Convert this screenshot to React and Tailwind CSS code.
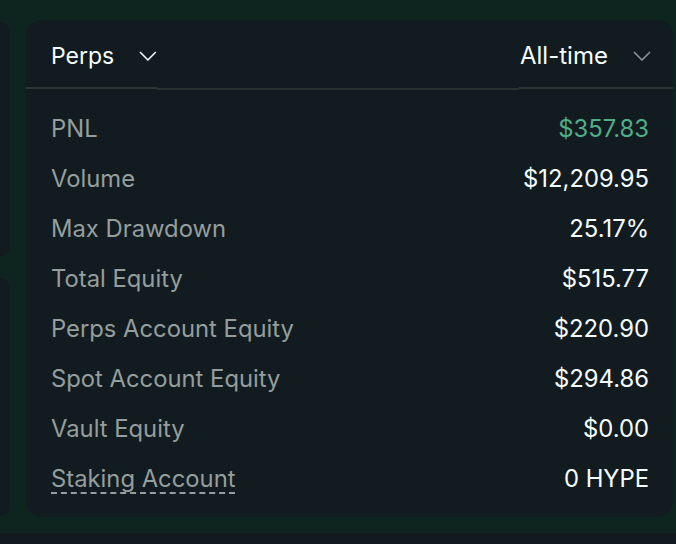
import React from 'react';

const rows = [
  { label: 'PNL', value: '$357.83', green: true },
  { label: 'Volume', value: '$12,209.95' },
  { label: 'Max Drawdown', value: '25.17%' },
  { label: 'Total Equity', value: '$515.77' },
  { label: 'Perps Account Equity', value: '$220.90' },
  { label: 'Spot Account Equity', value: '$294.86' },
  { label: 'Vault Equity', value: '$0.00' },
  { label: 'Staking Account', value: '0 HYPE', dashed: true },
];

const Chevron = ({ className }) => (
  <svg width="18" height="10" viewBox="0 0 18 10" fill="none" className={className}>
    <polyline points="1,1 9,9 17,1" stroke="currentColor" strokeWidth="1.6" />
  </svg>
);

export default function App() {
  return (
    <div className="w-[676px] h-[544px] bg-[#0e241e] flex flex-col overflow-hidden" style={{ fontFamily: 'Inter, "Liberation Sans", sans-serif' }}>
      <div className="flex h-[533px]">
        {/* Left panels peeking in */}
        <div className="w-[10px] flex flex-col gap-[21px] pt-[22px]">
          <div className="h-[235px] bg-[#121b20] rounded-r-[12px]" />
          <div className="h-[238px] bg-[#121b20] rounded-r-[12px]" />
        </div>

        {/* Main card */}
        <div className="ml-[16px] mt-[20px] w-[647px] h-[497px] bg-[#121b20] rounded-[16px] flex flex-col">
          {/* Header */}
          <div className="flex h-[69px]">
            <div className="w-[131px] flex items-center pl-[25px] pt-[5px] border-b-[2px] border-[#2f3535]">
              <span className="text-[23px] text-[#f6fefd] leading-none">Perps</span>
              <Chevron className="ml-[25px] text-[#f6fefd]" />
            </div>
            <div className="flex-1 border-b-[2px] border-[#2a3131] translate-y-[1px]" />
            <div className="w-[154px] flex items-center pl-[1px] pt-[5px] border-b-[2px] border-[#2f3535]">
              <span className="text-[24px] text-[#f6fefd] leading-none">All-time</span>
              <Chevron className="ml-[25px] text-[#8d9494]" />
            </div>
          </div>

          {/* Rows */}
          <div className="flex flex-col pt-[15px] pl-[25px] pr-[24px]">
            {rows.map((r) => (
              <div key={r.label} className="h-[50px] flex items-center justify-between text-[23.8px]">
                <span
                  className={
                    r.dashed
                      ? 'text-[#949e9c] underline decoration-dashed decoration-[1.5px] underline-offset-[5px]'
                      : 'text-[#949e9c]'
                  }
                >
                  {r.label}
                </span>
                <span className={r.green ? 'text-[#4fae88]' : 'text-[#f6fefd]'}>{r.value}</span>
              </div>
            ))}
          </div>
        </div>
      </div>
      <div className="flex-1 bg-[#121a20]" />
    </div>
  );
}
